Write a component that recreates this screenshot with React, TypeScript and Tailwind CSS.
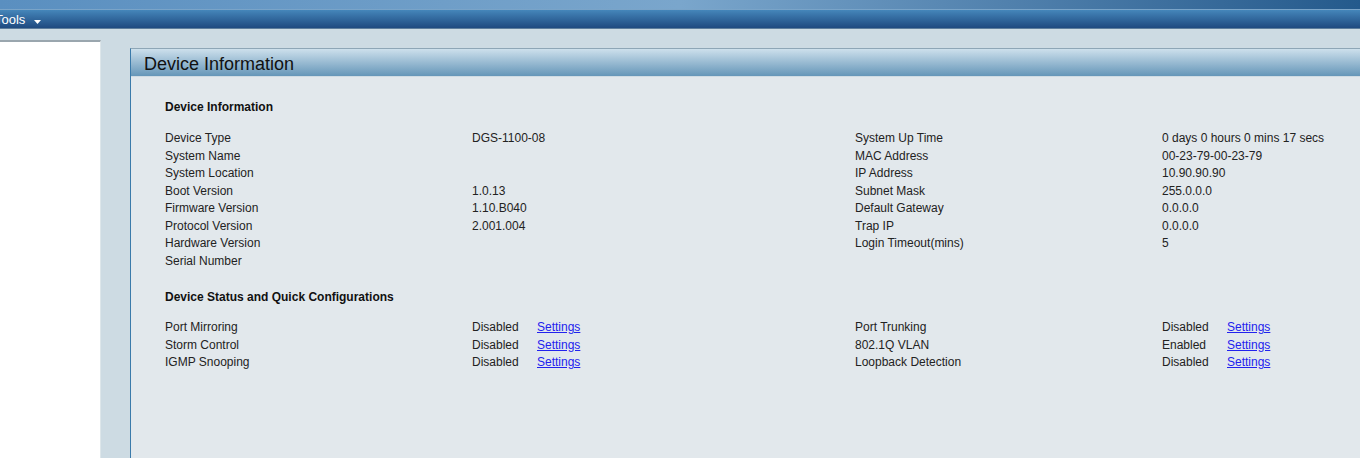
import React from 'react'

const infoLeft: [string, string][] = [
  ['Device Type', 'DGS-1100-08'],
  ['System Name', ''],
  ['System Location', ''],
  ['Boot Version', '1.0.13'],
  ['Firmware Version', '1.10.B040'],
  ['Protocol Version', '2.001.004'],
  ['Hardware Version', ''],
  ['Serial Number', ''],
]

const infoRight: [string, string][] = [
  ['System Up Time', '0 days 0 hours 0 mins 17 secs'],
  ['MAC Address', '00-23-79-00-23-79'],
  ['IP Address', '10.90.90.90'],
  ['Subnet Mask', '255.0.0.0'],
  ['Default Gateway', '0.0.0.0'],
  ['Trap IP', '0.0.0.0'],
  ['Login Timeout(mins)', '5'],
]

const status: [string, string, string, string][] = [
  ['Port Mirroring', 'Disabled', 'Port Trunking', 'Disabled'],
  ['Storm Control', 'Disabled', '802.1Q VLAN', 'Enabled'],
  ['IGMP Snooping', 'Disabled', 'Loopback Detection', 'Disabled'],
]

function Settings() {
  return <a href="#" className="text-[#2222ee] underline">Settings</a>
}

export default function App() {
  const rows = Array.from({ length: 8 }, (_, i) => i)
  return (
    <div
      className="flex h-[458px] w-[1360px] flex-col overflow-hidden bg-[#cddbe3] text-[12px] text-[#222]"
      style={{ fontFamily: '"Liberation Sans", Arial, sans-serif' }}
    >
      <div className="h-[9px] shrink-0 bg-gradient-to-r from-[#5a8fc0] via-[#7aa6cc] to-[#245a8c]" />
      <div className="flex h-[20px] shrink-0 items-center border-t border-[#7aa4c8] border-b border-b-[#5d7d9c] bg-gradient-to-b from-[#4586ba] to-[#1f4a80] pt-[2px] text-[13px] text-white">
        <span className="-ml-[5px]">Tools</span>
        <svg width="7" height="4" viewBox="0 0 7 4" className="ml-[9px] mt-[3px]">
          <path d="M0 0h7L3.5 4z" fill="#fff" />
        </svg>
      </div>

      <div className="flex min-h-0 flex-1">
        <div className="mt-[11px] w-[101px] shrink-0 border-t-2 border-r border-t-[#9aa6ae] border-r-[#dde6ea] bg-white" />

        <div className="ml-[29px] mt-[19px] flex min-w-0 flex-1 flex-col border-l border-t border-l-[#3a7aaa] border-t-[#8ea6b6] bg-[#e2e8ec]">
          <div className="flex h-[28px] shrink-0 items-center border-b border-[#cfdbe3] bg-gradient-to-b from-[#cde0ec] to-[#6596b8] pl-[13px] pt-[3px] text-[18px] text-[#111]">
            Device Information
          </div>

          <div className="pl-[34px] pt-[22px]">
            <div className="h-[17px] font-bold leading-[17px] text-[#111]">Device Information</div>
            <div className="mt-[14px] grid grid-cols-[307px_383px_307px_1fr] leading-[17.5px]">
              {rows.map((i) => (
                <React.Fragment key={i}>
                  <div>{infoLeft[i]?.[0] ?? ''}</div>
                  <div>{infoLeft[i]?.[1] ?? ''}</div>
                  <div>{infoRight[i]?.[0] ?? ''}</div>
                  <div className="whitespace-nowrap">{infoRight[i]?.[1] ?? ''}</div>
                </React.Fragment>
              ))}
            </div>

            <div className="mt-[19px] h-[17px] font-bold leading-[17px] text-[#111]">Device Status and Quick Configurations</div>
            <div className="mt-[13px] grid grid-cols-[307px_383px_307px_1fr] leading-[17.5px]">
              {status.map(([a, b, c, d]) => (
                <React.Fragment key={a}>
                  <div>{a}</div>
                  <div className="flex">
                    <span className="w-[65px]">{b}</span>
                    <Settings />
                  </div>
                  <div>{c}</div>
                  <div className="flex">
                    <span className="w-[65px]">{d}</span>
                    <Settings />
                  </div>
                </React.Fragment>
              ))}
            </div>
          </div>
        </div>
      </div>
    </div>
  )
}
